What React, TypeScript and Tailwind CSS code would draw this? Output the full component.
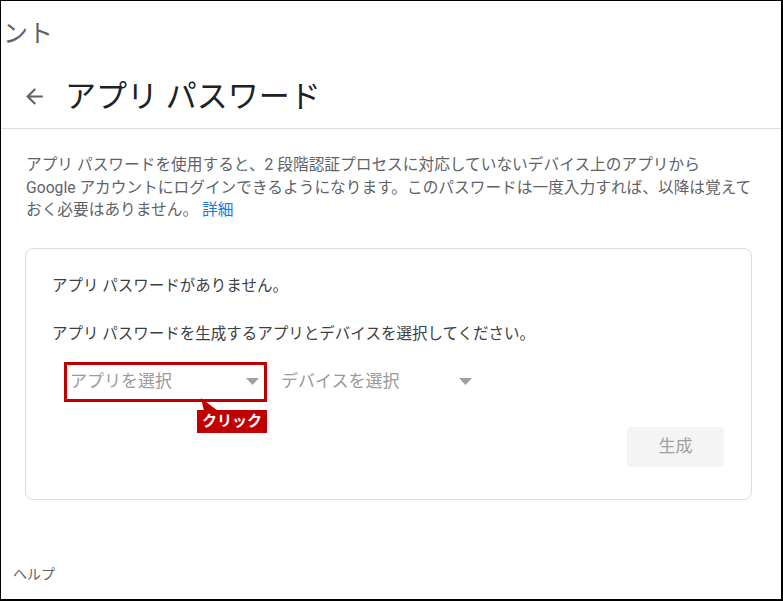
import React from "react";

function Caret() {
  return (
    <svg width="13" height="7" viewBox="0 0 13 7" className="block">
      <path d="M0 0 L13 0 L6.5 7 Z" fill="#a0a0a0" />
    </svg>
  );
}

export default function App() {
  const font = { fontFamily: '"Roboto", "Noto Sans CJK JP", sans-serif' };
  return (
    <div
      className="w-[783px] h-[601px] overflow-hidden bg-white border-t border-l border-r-2 border-b-2 border-black"
      style={font}
    >
      {/* breadcrumb (clipped) */}
      <div className="h-[64px] flex items-center overflow-hidden">
        <span className="ml-[-73px] whitespace-nowrap text-[25px] leading-none text-[#5f6368]">
          アカウント
        </span>
      </div>

      {/* heading */}
      <div className="h-[64px] flex items-center border-b border-[#dadce0]">
        <svg
          width="25"
          height="25"
          viewBox="0 0 24 24"
          className="ml-[21px] mr-[18px] shrink-0"
        >
          <path
            d="M20 11H7.83l5.59-5.59L12 4l-8 8 8 8 1.41-1.41L7.83 13H20v-2z"
            fill="#5f6368"
          />
        </svg>
        <h1 className="text-[31px] leading-none text-[#202124] whitespace-nowrap">
          アプリ パスワード
        </h1>
      </div>

      {/* description */}
      <p className="mt-[25px] ml-[25px] text-[15.7px] leading-[22.5px] text-[#5f6368] whitespace-nowrap">
        アプリ パスワードを使用すると、2 段階認証プロセスに対応していないデバイス上のアプリから
        <br />
        Google アカウントにログインできるようになります。このパスワードは一度入力すれば、以降は覚えて
        <br />
        おく必要はありません。 <span className="text-[#1a73e8]">詳細</span>
      </p>

      {/* card */}
      <div className="mt-[26px] ml-[24px] w-[727px] rounded-lg border border-[#dadce0] pt-[26px] pb-[32px]">
        <div className="pl-[26px] text-[15.5px] leading-[22px] text-[#3c4043] whitespace-nowrap">
          アプリ パスワードがありません。
        </div>
        <div className="mt-[26px] pl-[26px] text-[15.5px] leading-[22px] text-[#3c4043] whitespace-nowrap">
          アプリ パスワードを生成するアプリとデバイスを選択してください。
        </div>

        <div className="mt-[17px] ml-[38px] flex items-center">
          <div className="relative w-[203px] h-[40px] border-[3px] border-[#c00000] flex items-center justify-between pl-[3px] pr-[5px]">
            <span className="text-[17px] leading-none text-[#9a9a9a] whitespace-nowrap">
              アプリを選択
            </span>
            <Caret />
            {/* callout */}
            <svg
              width="20"
              height="14"
              viewBox="0 0 20 14"
              className="absolute left-[133px] top-[33px]"
            >
              <path d="M1 0 L4 13 L18 13 Z" fill="#c00000" />
            </svg>
            <div className="absolute left-[130px] top-[45px] w-[70px] h-[23px] bg-[#c00000] flex items-center justify-center text-[15px] font-bold leading-none text-white whitespace-nowrap">
              クリック
            </div>
          </div>
          <div className="ml-[14px] w-[191px] h-[40px] flex items-center justify-between">
            <span className="text-[17px] leading-none text-[#9a9a9a] whitespace-nowrap">
              デバイスを選択
            </span>
            <Caret />
          </div>
        </div>

        <div className="mt-[25px] flex justify-end pr-[27px]">
          <div className="w-[97px] h-[40px] rounded bg-[#f4f4f4] flex items-center justify-center text-[17px] leading-none text-[#a0a0a0]">
            生成
          </div>
        </div>
      </div>

      {/* footer */}
      <div className="mt-[64px] pl-[12px] text-[14px] leading-[20px] text-[#5f6368]">
        ヘルプ
      </div>
    </div>
  );
}
